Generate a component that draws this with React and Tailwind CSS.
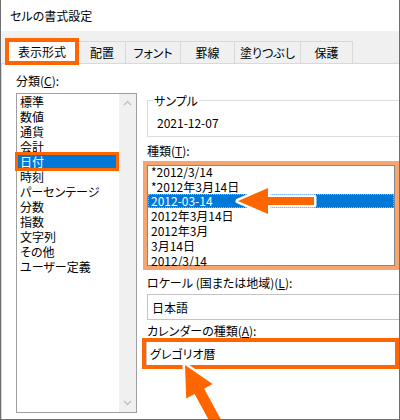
import React from "react";

const categories = ["標準", "数値", "通貨", "会計", "日付", "時刻", "パーセンテージ", "分数", "指数", "文字列", "その他", "ユーザー定義"];
const types = ["*2012/3/14", "*2012年3月14日", "2012-03-14", "2012年3月14日", "2012年3月", "3月14日", "2012/3/14"];
const tabs = [
    { label: "配置", w: "w-[47px]" },
    { label: "フォント", w: "w-[55px]" },
    { label: "罫線", w: "w-[54px]" },
    { label: "塗りつぶし", w: "w-[66px]" },
    { label: "保護", w: "w-[52px]" },
];

function Chevron({ up }) {
    return (
        <svg width="9" height="6" viewBox="0 0 9 6">
            <path d={up ? "M1 5 L4.5 1.5 L8 5" : "M1 1 L4.5 4.5 L8 1"} fill="none" stroke="#c2c2c2" strokeWidth="1.5" />
        </svg>
    );
}

function Arrows() {
    const a1 = "238,201 268,188 268,197 314,197 314,205 268,205 268,214";
    const a2 = "185,365 212.6,384.1 204.2,388.7 225.7,428.3 216.1,433.5 194.6,393.9 186.2,398.5";
    return (
        <svg className="absolute left-[-1px] top-0 pointer-events-none" width="400" height="420" viewBox="0 0 400 420">
            <polygon points={a1} fill="#ffffff" stroke="#ffffff" strokeWidth="5" strokeLinejoin="round" />
            <polygon points={a1} fill="#ff6600" />
            <polygon points={a2} fill="#ffffff" stroke="#ffffff" strokeWidth="5" strokeLinejoin="round" />
            <polygon points={a2} fill="#ff6600" />
        </svg>
    );
}

export default function App() {
    return (
        <div className="relative w-[400px] h-[420px] overflow-hidden bg-white border-l border-r border-b border-[#6e6e6e] text-black text-[12px] font-['Noto_Sans_CJK_JP','Noto_Sans',sans-serif] [font-feature-settings:'palt']">
            {/* title bar */}
            <div className="h-[31px] flex items-center pl-[9px] leading-[15px]">セルの書式設定</div>

            {/* tabs */}
            <div className="h-[33px] flex items-end pl-[4px] bg-[#f0f0f0] border-b border-[#d9d9d9]">
                <div className="relative z-10 w-[74px] h-[27px] -mb-[2px] border-4 border-[#ff6600] bg-white flex items-center justify-center leading-[15px]">
                    表示形式
                </div>
                {tabs.map((t) => (
                    <div key={t.label} className={`${t.w} h-[22px] border-t border-r border-[#d9d9d9] bg-[#f0f0f0] flex items-center justify-center leading-[15px]`}>
                        {t.label}
                    </div>
                ))}
            </div>

            {/* panel */}
            <div className="h-[355px] border-l border-[#dadada] flex pl-[14px] pt-[9px] leading-[15px]">
                <div className="w-[121px] flex flex-col">
                    <div className="h-[15px]">分類(<span className="underline">C</span>):</div>
                    <div className="mt-[5px] h-[320px] border border-[#a0a0a0] flex">
                        <div className="flex-1 flex flex-col">
                            {categories.map((c) =>
                                c === "日付" ? (
                                    <div key={c} className="ml-[1px] w-[98px] h-[13px] my-[1px] leading-[13px] pl-[2px] bg-[#0078d7] text-white outline-3 outline-[#ff6600]">
                                        {c}
                                    </div>
                                ) : (
                                    <div key={c} className="h-[15px] pl-[3px] whitespace-nowrap">{c}</div>
                                )
                            )}
                        </div>
                        <div className="w-[17px] bg-[#f0f0f0] flex flex-col items-center justify-between py-[6px]">
                            <Chevron up />
                            <Chevron />
                        </div>
                    </div>
                </div>

                <div className="ml-[10px] flex-1 min-w-0 mt-[27px] flex flex-col">
                    {/* sample group */}
                    <div className="relative w-[260px] h-[37px] border-t border-l border-b border-[#dcdcdc] pl-[9px] pt-[14px]">
                        <span className="absolute left-[5px] top-[-8px] bg-white px-[1px]">サンプル</span>
                        <div>2021-12-07</div>
                    </div>

                    <div className="mt-[6px] h-[15px]">種類(<span className="underline">T</span>):</div>
                    <div className="mt-[7px] w-[248px] h-[101px] border border-[#828790] outline-4 outline-[#f6a56f]">
                        <div className="-mt-[2px] flex flex-col">
                            {types.map((t, i) =>
                                i === 2 ? (
                                    <div key={i} className="h-[14px] leading-[14px] pl-[3px] bg-[#0078d7] text-white outline-1 outline-dotted outline-[#e8a060] -outline-offset-1">
                                        {t}
                                    </div>
                                ) : (
                                    <div key={i} className="h-[15px] pl-[3px] whitespace-nowrap">{t}</div>
                                )
                            )}
                        </div>
                    </div>

                    <div className="mt-[9px] h-[15px] whitespace-nowrap">ロケール (国または地域)(<span className="underline">L</span>):</div>
                    <div className="mt-[4px] w-[260px] h-[26px] border border-[#c4c4c4] flex items-center pl-[4px]">日本語</div>

                    <div className="mt-[3px] h-[15px] whitespace-nowrap">カレンダーの種類(<span className="underline">A</span>):</div>
                    <div className="-ml-[5px] w-[257px] h-[31px] border-4 border-[#ff6600] bg-white">
                        <div className="h-full border-l border-[#c4c4c4] flex items-center pl-[3px]">グレゴリオ暦</div>
                    </div>
                </div>
            </div>

            <Arrows />
        </div>
    );
}
